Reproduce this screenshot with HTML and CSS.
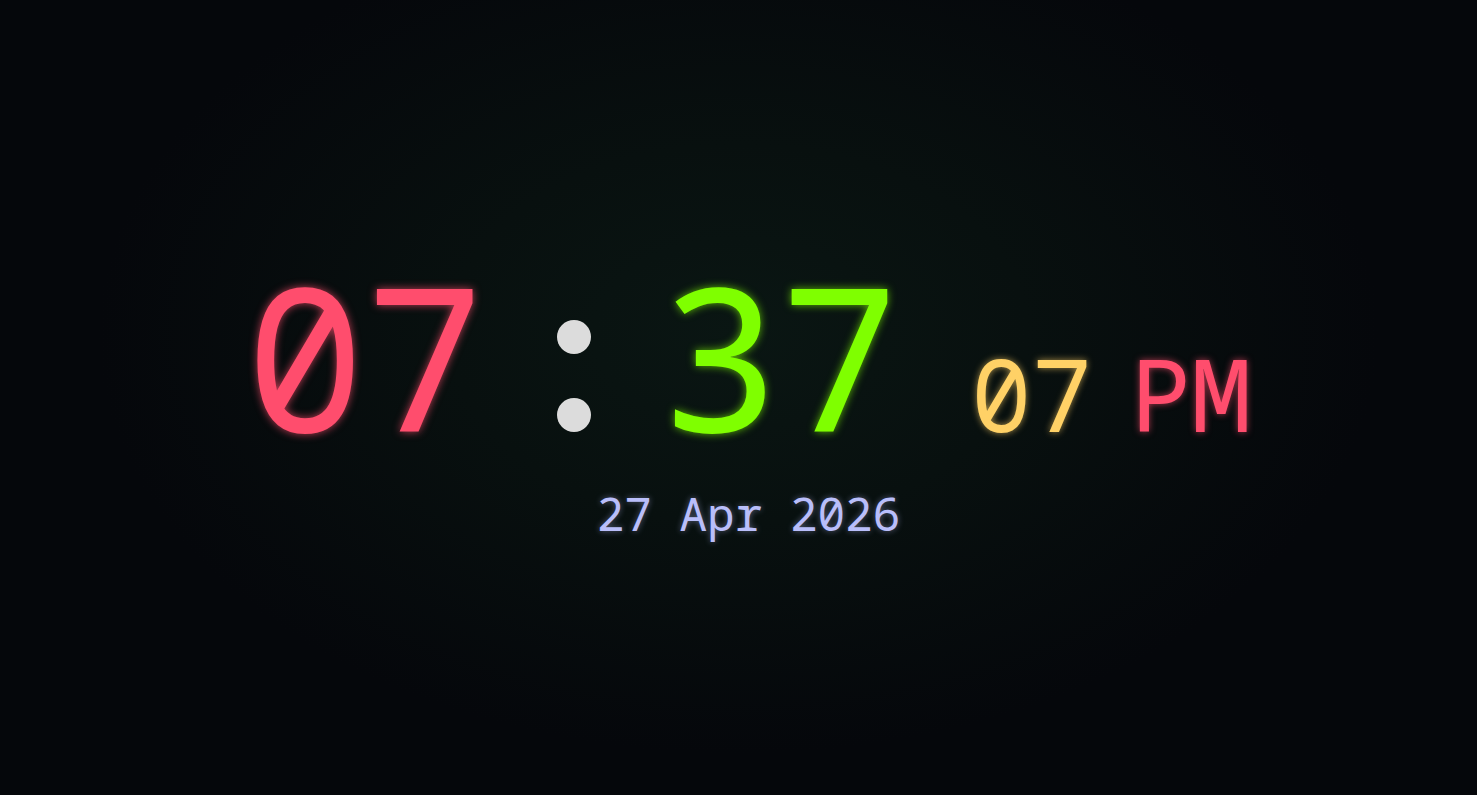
FILE: index.html
```html
<!DOCTYPE html>
<html lang="en">
<head>
<meta charset="utf-8">
<title>Clock</title>
<link rel="stylesheet" href="styles.css">
</head>
<body>
<main class="stage">
  <div class="clock">
    <div class="time">
      <span class="hours">07</span>
      <span class="colon"><i class="dot"></i><i class="dot"></i></span>
      <span class="minutes">37</span>
      <span class="seconds">07</span>
      <span class="ampm">PM</span>
    </div>
    <div class="date">27 Apr 2026</div>
  </div>
</main>
</body>
</html>
```

FILE: styles.css
```css
html, body {
  margin: 0;
  height: 100%;
}

body {
  background: #05060b;
  font-family: "Noto Sans Mono", "DejaVu Sans Mono", monospace;
}

.stage {
  height: 100%;
  display: flex;
  align-items: center;
  justify-content: center;
  background: radial-gradient(ellipse 640px 420px at 50% 42%, #0a1613 0%, #08100f 45%, #05070b 100%);
}

.clock {
  display: flex;
  flex-direction: column;
  align-items: center;
  padding-left: 20px;
  padding-bottom: 4px;
}

.time {
  display: flex;
  align-items: baseline;
  line-height: 1;
}

.hours, .minutes {
  font-size: 199px;
}

.hours {
  color: #ff4d6d;
  text-shadow: 0 0 8px rgba(255, 77, 109, 0.75);
}

.minutes {
  color: #7fff00;
  text-shadow: 0 0 8px rgba(127, 255, 0, 0.7);
}

.colon {
  display: block;
  margin: 0 69px 0 73px;
}

.dot {
  display: block;
  width: 34px;
  height: 34px;
  border-radius: 50%;
  background: #dcdcdc;
}

.dot + .dot {
  margin-top: 44px;
}

.seconds {
  font-size: 101px;
  color: #ffd166;
  text-shadow: 0 0 7px rgba(255, 209, 102, 0.65);
  margin-left: 72px;
}

.ampm {
  font-size: 101px;
  color: #ff4d6d;
  text-shadow: 0 0 7px rgba(255, 77, 109, 0.65);
  margin-left: 38px;
}

.date {
  margin-top: 36px;
  font-size: 46px;
  color: #b9befa;
  text-shadow: 0 0 6px rgba(185, 190, 250, 0.45);
  line-height: 1;
}
```
